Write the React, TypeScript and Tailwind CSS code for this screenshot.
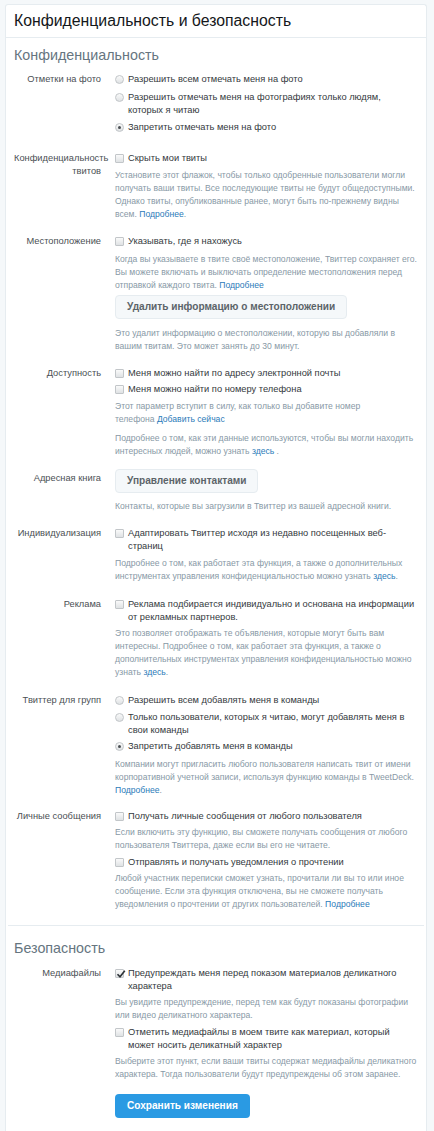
import React from 'react';

const font = { fontFamily: '"Liberation Sans", Arial, sans-serif' };

const Box = ({ type, checked }: { type: 'radio' | 'check'; checked?: boolean }) => {
    if (type === 'radio') {
        return (
            <span className="mt-[2px] flex h-[9px] w-[9px] shrink-0 items-center justify-center rounded-full border border-[#c2c6c9] bg-gradient-to-b from-[#fafafa] to-[#dfe2e4]">
                {checked && <span className="h-[3px] w-[3px] rounded-full bg-[#4a4f53]" />}
            </span>
        );
    }
    return (
        <span className="relative mt-[2px] flex h-[9px] w-[9px] shrink-0 items-center justify-center rounded-[1px] border border-[#c2c6c9] bg-gradient-to-b from-[#fafafa] to-[#dfe2e4]">
            {checked && (
                <svg viewBox="0 0 10 10" className="absolute -top-[1px] left-0 h-[10px] w-[10px]">
                    <path d="M1.5 5.2 L4 7.8 L8.8 1.8" fill="none" stroke="#2d3236" strokeWidth="1.6" />
                </svg>
            )}
        </span>
    );
};

const Option = ({ type, checked, children, className = 'mt-[4px]' }: { type: 'radio' | 'check'; checked?: boolean; children: React.ReactNode; className?: string }) => (
    <label className={`flex items-start gap-[4px] text-[9.3px] leading-[13px] text-[#34393d] ${className}`}>
        <Box type={type} checked={checked} />
        <span>{children}</span>
    </label>
);

const Help = ({ children, className = 'mt-[4px]' }: { children: React.ReactNode; className?: string }) => (
    <p className={`text-[8.6px] leading-[13px] text-[#8899a6] ${className}`}>{children}</p>
);

const A = ({ children }: { children: React.ReactNode }) => <a className="text-[#2b7bb9]">{children}</a>;

// keeps the word before a link on the same line as the link
const NoWrap = ({ children }: { children: React.ReactNode }) => <span className="whitespace-nowrap">{children}</span>;

const GrayButton = ({ children, className = '' }: { children: React.ReactNode; className?: string }) => (
    <button className={`h-[24px] rounded-[4px] border border-[#e6ecf0] bg-[#f5f8fa] px-[11px] text-[10.1px] font-bold text-[#5c6469] ${className}`}>
        {children}
    </button>
);

const Row = ({ label, children, className = '', labelClass = '' }: { label: React.ReactNode; children: React.ReactNode; className?: string; labelClass?: string }) => (
    <div className={`flex ${className}`}>
        <div className={`w-[87px] shrink-0 text-right text-[9.3px] leading-[13px] text-[#4b5054] ${labelClass}`}>{label}</div>
        <div className="ml-[14px] min-w-0 flex-1">{children}</div>
    </div>
);

export default function App() {
    return (
        <div className="min-h-[1131px] bg-[#f5f8fa] pt-[4px]" style={font}>
            <div className="ml-[5px] mr-[7px] min-h-[1127px] rounded-t-[3px] border border-b-0 border-[#e6ecf0] bg-white">
                {/* header */}
                <div className="flex h-[33px] items-center border-b border-[#e6ecf0] px-[8px]">
                    <h1 className="text-[15.8px] text-[#14171a]">Конфиденциальность и безопасность</h1>
                </div>

                {/* privacy */}
                <div className="pl-[8px] pr-[8px] pt-[7px]">
                    <h2 className="text-[14.3px] leading-[20px] text-[#66757f]">Конфиденциальность</h2>

                    <Row label="Отметки на фото" className="mt-[8px]">
                        <Option type="radio" className="">Разрешить всем отмечать меня на фото</Option>
                        <Option type="radio" className="mt-[5px]">Разрешить отмечать меня на фотографиях только людям, которых я читаю</Option>
                        <Option type="radio" checked>Запретить отмечать меня на фото</Option>
                    </Row>

                    <Row label="Конфиденциальность твитов" className="mt-[18px]">
                        <Option type="check" className="">Скрыть мои твиты</Option>
                        <Help>
                            Установите этот флажок, чтобы только одобренные пользователи могли получать ваши твиты. Все последующие твиты не будут общедоступными. Однако твиты, опубликованные ранее, могут быть по-прежнему видны всем. <A>Подробнее</A>.
                        </Help>
                    </Row>

                    <Row label="Местоположение" className="mt-[14px]">
                        <Option type="check" className="">Указывать, где я нахожусь</Option>
                        <Help className="mt-[5px]">
                            Когда вы указываете в твите своё местоположение, Твиттер сохраняет его. Вы можете включать и выключать определение местоположения перед отправкой каждого твита. <A>Подробнее</A>
                        </Help>
                        <GrayButton className="mt-[3px]">Удалить информацию о местоположении</GrayButton>
                        <Help className="mt-[8px]">
                            Это удалит информацию о местоположении, которую вы добавляли в вашим твитам. Это может занять до 30 минут.
                        </Help>
                    </Row>

                    <Row label="Доступность" className="mt-[14px]">
                        <Option type="check" className="">Меня можно найти по адресу электронной почты</Option>
                        <Option type="check" className="mt-[3px]">Меня можно найти по номеру телефона</Option>
                        <Help>
                            Этот параметр вступит в силу, как только вы добавите номер <NoWrap>телефона <A>Добавить сейчас</A></NoWrap>
                        </Help>
                        <Help className="mt-[6px]">
                            Подробнее о том, как эти данные используются, чтобы вы могли находить интересных людей, можно узнать <A>здесь</A> .
                        </Help>
                    </Row>

                    <Row label="Адресная книга" className="mt-[9px]" labelClass="pt-[5px]">
                        <GrayButton>Управление контактами</GrayButton>
                        <Help className="mt-[7px]">Контакты, которые вы загрузили в Твиттер из вашей адресной книги.</Help>
                    </Row>

                    <Row label="Индивидуализация" className="mt-[14px]">
                        <Option type="check" className="">Адаптировать Твиттер исходя из недавно посещенных веб-страниц</Option>
                        <Help>
                            Подробнее о том, как работает эта функция, а также о дополнительных инструментах управления конфиденциальностью можно <NoWrap>узнать <A>здесь</A>.</NoWrap>
                        </Help>
                    </Row>

                    <Row label="Реклама" className="mt-[15px]">
                        <Option type="check" className="">Реклама подбирается индивидуально и основана на информации от рекламных партнеров.</Option>
                        <Help className="mt-[3px]">
                            Это позволяет отображать те объявления, которые могут быть вам интересны. Подробнее о том, как работает эта функция, а также о дополнительных инструментах управления конфиденциальностью можно <NoWrap>узнать <A>здесь</A>.</NoWrap>
                        </Help>
                    </Row>

                    <Row label="Твиттер для групп" className="mt-[15px]">
                        <Option type="radio" className="">Разрешить всем добавлять меня в команды</Option>
                        <Option type="radio">Только пользователи, которых я читаю, могут добавлять меня в свои команды</Option>
                        <Option type="radio" checked className="mt-[3px]">Запретить добавлять меня в команды</Option>
                        <Help className="mt-[5px]">
                            Компании могут пригласить любого пользователя написать твит от имени корпоративной учетной записи, используя функцию команды в TweetDeck. <A>Подробнее</A>.
                        </Help>
                    </Row>

                    <Row label="Личные сообщения" className="mt-[13px]">
                        <Option type="check" className="">Получать личные сообщения от любого пользователя</Option>
                        <Help className="mt-[3px]">
                            Если включить эту функцию, вы сможете получать сообщения от любого пользователя Твиттера, даже если вы его не читаете.
                        </Help>
                        <Option type="check">Отправлять и получать уведомления о прочтении</Option>
                        <Help className="mt-[3px]">
                            Любой участник переписки сможет узнать, прочитали ли вы то или иное сообщение. Если эта функция отключена, вы не сможете получать уведомления о прочтении от других пользователей. <A>Подробнее</A>
                        </Help>
                    </Row>
                </div>

                <div className="mx-[2px] mt-[14px] border-t border-[#e6ecf0]" />

                {/* security */}
                <div className="pl-[8px] pr-[8px] pt-[12px] pb-[12px]">
                    <h2 className="text-[14.3px] leading-[20px] text-[#66757f]">Безопасность</h2>

                    <Row label="Медиафайлы" className="mt-[9px]">
                        <Option type="check" checked className="">Предупреждать меня перед показом материалов деликатного характера</Option>
                        <Help className="mt-[3px]">
                            Вы увидите предупреждение, перед тем как будут показаны фотографии или видео деликатного характера.
                        </Help>
                        <Option type="check">Отметить медиафайлы в моем твите как материал, который может носить деликатный характер</Option>
                        <Help className="mt-[3px]">
                            Выберите этот пункт, если ваши твиты содержат медиафайлы деликатного характера. Тогда пользователи будут предупреждены об этом заранее.
                        </Help>
                        <button className="mt-[13px] h-[24px] rounded-[4px] bg-[#2a9ae3] px-[12px] text-[10.1px] font-bold text-white">
                            Сохранить изменения
                        </button>
                    </Row>
                </div>
            </div>
        </div>
    );
}
